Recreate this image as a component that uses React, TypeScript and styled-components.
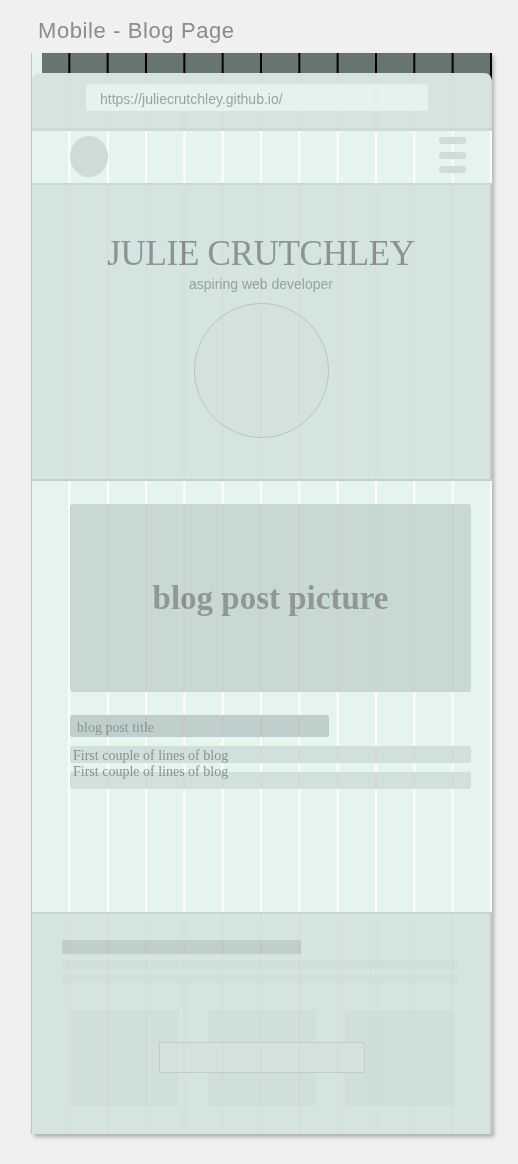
import { createGlobalStyle, css, styled } from 'styled-components';

const GlobalStyle = createGlobalStyle`
  body {
    margin: 0;
    background: #f0f0f0;
    font-family: 'Liberation Sans', Arial, sans-serif;
  }
`;

// 12-column layout grid, one thin line at the right of each column
const columnLines = (color: string) => css`
  background-image: linear-gradient(
    to right,
    transparent calc(100% - 2px),
    ${color} calc(100% - 2px)
  );
  background-size: calc(100% / 12) 100%;
`;

const serif = `'Liberation Serif', 'Times New Roman', serif`;

export default function App() {
  return (
    <>
      <GlobalStyle />
      <Page>
        <FrameLabel>Mobile - Blog Page</FrameLabel>
        <Frame>
          <TopBar>
            <Chrome>
              <UrlBar>https://juliecrutchley.github.io/</UrlBar>
            </Chrome>
          </TopBar>

          <Nav>
            <Avatar />
            <Burger>
              <BurgerBar />
              <BurgerBar />
              <BurgerBar />
            </Burger>
          </Nav>

          <Hero>
            <Name>JULIE CRUTCHLEY</Name>
            <Tagline>aspiring web developer</Tagline>
            <Portrait />
          </Hero>

          <Main>
            <Picture>blog post picture</Picture>
            <PostTitle>blog post title</PostTitle>
            <Excerpt>
              <ExcerptBar>
                <ExcerptText>
                  First couple of lines of blog
                  <br />
                  First couple of lines of blog
                </ExcerptText>
              </ExcerptBar>
              <ExcerptBar />
            </Excerpt>
          </Main>

          <Footer>
            <FooterTitle />
            <FooterLine />
            <FooterLine />
            <FooterCols>
              <FooterCol />
              <FooterCol />
              <FooterCol />
              <FooterButton />
            </FooterCols>
          </Footer>

          <GridOverlay />
        </Frame>
      </Page>
    </>
  );
}

const Page = styled.div`
  padding: 19px 0 30px 32px;
`;

const FrameLabel = styled.div`
  margin-left: 6px;
  font-size: 22px;
  line-height: 24px;
  letter-spacing: 0.6px;
  color: #8c8c8c;
`;

const Frame = styled.div`
  position: relative;
  margin-top: 10px;
  width: 460px;
  height: 1081px;
  display: flex;
  flex-direction: column;
  background: #e4f3ec;
  box-shadow: -1px 0 0 #c2c2c2, 2px 3px 4px rgba(0, 0, 0, 0.28);
`;

const TopBar = styled.div`
  height: 75px;
  display: flex;
  flex-direction: column;
  justify-content: flex-end;
  background-image:
    linear-gradient(to right, transparent calc(100% - 2px), #000 calc(100% - 2px)),
    linear-gradient(to right, #e4f3ec 10px, #67766d 10px);
  background-size: calc(100% / 12) 40px, 100% 40px;
  background-repeat: repeat-x, no-repeat;
`;

const Chrome = styled.div`
  height: 55px;
  padding: 11px 0 0 54px;
  box-sizing: border-box;
  background: #d5e4df;
  border-radius: 8px 8px 0 0;
`;

const UrlBar = styled.div`
  width: 342px;
  height: 27px;
  padding: 2px 0 0 14px;
  box-sizing: border-box;
  border-radius: 2px;
  background: #e4f3ec;
  font-size: 14px;
  line-height: 27px;
  color: #9ba4a0;
`;

const Nav = styled.div`
  height: 57px;
  display: flex;
  align-items: flex-start;
  justify-content: space-between;
  padding: 6px 26px 0 38px;
  box-sizing: border-box;
  border-top: 3px solid #cbdbd5;
  border-bottom: 2px solid #c9d9d3;
  background-color: #e5f4ed;
  ${columnLines('#ffffff')}
`;

const Avatar = styled.div`
  width: 38px;
  height: 41px;
  border-radius: 50%;
  background: #cddcd6;
  margin-top: -1px;
`;

const Burger = styled.div`
  display: flex;
  flex-direction: column;
  gap: 7.5px;
`;

const BurgerBar = styled.div`
  width: 27px;
  height: 7px;
  border-radius: 3px;
  background: #cfddd7;
`;

const Hero = styled.div`
  height: 296px;
  display: flex;
  flex-direction: column;
  align-items: center;
  padding-top: 49px;
  box-sizing: border-box;
  background: #d4e4e0;
  border-right: 2px solid #c3d2cd;
  border-bottom: 2px solid #c3d2cd;
`;

const Name = styled.h1`
  margin: 0;
  font-family: ${serif};
  font-weight: 400;
  font-size: 35px;
  line-height: 40px;
  letter-spacing: -0.3px;
  color: #8b958f;
`;

const Tagline = styled.div`
  margin-top: 2px;
  font-size: 14px;
  line-height: 16px;
  color: #99a39e;
`;

const Portrait = styled.div`
  margin-top: 11px;
  width: 133px;
  height: 133px;
  border-radius: 50%;
  border: 1px solid #b8c5bf;
  background: #d3e2dc;
`;

const Main = styled.div`
  height: 431px;
  display: flex;
  flex-direction: column;
  align-items: flex-start;
  padding: 23px 21px 0 38px;
  box-sizing: border-box;
  background-color: #e5f4ed;
  ${columnLines('#ffffff')}
`;

const Picture = styled.div`
  align-self: stretch;
  height: 188px;
  display: flex;
  align-items: center;
  justify-content: center;
  border-radius: 3px;
  background: #c8d9d4;
  font-family: ${serif};
  font-weight: 700;
  font-size: 33px;
  color: #8e9993;
`;

const PostTitle = styled.div`
  margin-top: 23px;
  width: 259px;
  height: 22px;
  padding: 3px 0 0 7px;
  box-sizing: border-box;
  border-radius: 2px;
  background: #bfd0cc;
  font-family: ${serif};
  font-size: 14px;
  line-height: 19px;
  color: #8c958f;
`;

const Excerpt = styled.div`
  align-self: stretch;
  margin-top: 9px;
  display: flex;
  flex-direction: column;
  gap: 9px;
`;

const ExcerptBar = styled.div`
  height: 17px;
  border-radius: 2px;
  background: #d0e0dc;
`;

const ExcerptText = styled.div`
  position: relative;
  z-index: 1;
  padding: 2px 0 0 3px;
  font-family: ${serif};
  font-size: 14px;
  line-height: 16px;
  color: #89938e;
  white-space: nowrap;
`;

const Footer = styled.div`
  flex: 1;
  display: flex;
  flex-direction: column;
  align-items: flex-start;
  padding: 26px 32px 0 30px;
  box-sizing: border-box;
  background: #d4e4e0;
  border-top: 2px solid #c6d6d1;
  border-right: 2px solid #c3d2cd;
`;

const FooterTitle = styled.div`
  width: 239px;
  height: 14px;
  background: #bfcfcb;
`;

const FooterLine = styled.div`
  margin-top: 6px;
  align-self: stretch;
  height: 8.5px;
  background: #cfdfda;
`;

const FooterCols = styled.div`
  position: relative;
  margin: 27px 0 0 9px;
  display: flex;
  gap: 29px;
`;

const FooterCol = styled.div`
  width: 108px;
  height: 96px;
  background: #cfdfdb;
`;

const FooterButton = styled.div`
  position: absolute;
  left: 88px;
  top: 32px;
  width: 204px;
  height: 29px;
  border: 1px solid #c0cdc8;
  background: #d3e2dc;
`;

const GridOverlay = styled.div`
  position: absolute;
  inset: 0;
  pointer-events: none;
  mix-blend-mode: overlay;
  opacity: 0.65;
  ${columnLines('rgb(140, 90, 130)')}
`;
